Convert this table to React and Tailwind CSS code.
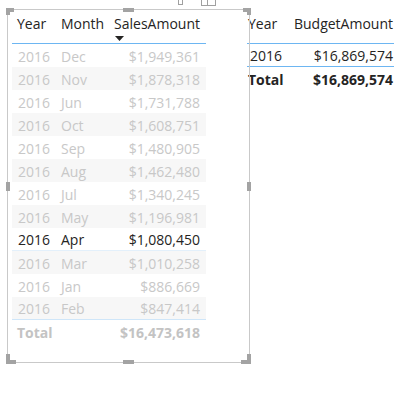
const rows = [
  ['Dec', '$1,949,361'],
  ['Nov', '$1,878,318'],
  ['Jun', '$1,731,788'],
  ['Oct', '$1,608,751'],
  ['Sep', '$1,480,905'],
  ['Aug', '$1,462,480'],
  ['Jul', '$1,340,245'],
  ['May', '$1,196,981'],
  ['Apr', '$1,080,450'],
  ['Mar', '$1,010,258'],
  ['Jan', '$886,669'],
  ['Feb', '$847,414'],
]

function Handle({ className }) {
  return <div className={`absolute bg-[#a3a3a3] ${className}`} />
}

function SalesTable() {
  return (
    <div className="w-[194px] ml-[4px]">
      <div className="relative flex h-[34px] items-start pt-[7px] text-[#252423] border-b border-[#6db6f2]">
        <div className="w-[44px] pl-[5px]">Year</div>
        <div className="w-[53px] pl-[5px]">Month</div>
        <div className="flex-1 pr-[6px] text-right">SalesAmount</div>
        <svg className="absolute left-[103px] top-[26px]" width="9" height="5" viewBox="0 0 9 5">
          <path d="M0 0 H9 L4.5 5 Z" fill="#252423" />
        </svg>
      </div>
      {rows.map(([m, v], i) => {
        const active = m === 'Apr'
        return (
          <div
            key={m}
            className={`flex h-[23px] items-center pt-[2px] ${i % 2 ? 'bg-[#f7f7f7]' : 'bg-white'} ${active ? 'text-[#252423] border-b border-[#e3f0fb]' : 'text-[#c8c8c8]'} ${i === rows.length - 1 ? 'border-b border-[#cfe6f9]' : ''}`}
          >
            <div className="w-[44px] pl-[6px]">2016</div>
            <div className="w-[53px] pl-[5px]">{m}</div>
            <div className="flex-1 pr-[6px] text-right">{v}</div>
          </div>
        )
      })}
      <div className="flex h-[23px] items-center pt-[2px] font-bold text-[#c3c3c3]">
        <div className="w-[97px] pl-[5px]">Total</div>
        <div className="flex-1 pr-[6px] text-right">$16,473,618</div>
      </div>
    </div>
  )
}

function BudgetTable() {
  return (
    <div className="w-[147px] -ml-[3px] mt-[1px] text-[#252423]">
      <div className="flex h-[34px] items-start pt-[7px] border-b border-[#6db6f2]">
        <div className="w-[40px] pl-[1px]">Year</div>
        <div className="flex-1 pr-[1px] text-right">BudgetAmount</div>
      </div>
      <div className="flex h-[23px] items-center pt-[2px] border-b border-[#6db6f2]">
        <div className="w-[40px] pl-[3px]">2016</div>
        <div className="flex-1 pr-[1px] text-right">$16,869,574</div>
      </div>
      <div className="flex h-[23px] items-center pt-[2px] font-bold">
        <div className="w-[40px] pl-[1px]">Total</div>
        <div className="flex-1 pr-[1px] text-right">$16,869,574</div>
      </div>
    </div>
  )
}

export default function App() {
  return (
    <div
      className="relative w-[400px] h-[394px] bg-white text-[14px] leading-none"
      style={{ fontFamily: '"Open Sans", "Liberation Sans", sans-serif' }}
    >
      <div className="absolute left-[178px] top-0 w-[5px] h-[5px] border-x border-b border-[#a0a0a0]" />
      <div className="absolute left-[201px] top-0 w-[15px] h-[6px] border-x border-b border-[#a0a0a0]">
        <div className="ml-[5px] w-px h-full bg-[#a0a0a0]" />
      </div>
      <div className="flex pt-[9px] pl-[7px]">
        <div className="relative z-10 w-[243px] h-[354px] border-[1.5px] border-[#c9c9c9]">
          <SalesTable />
          <Handle className="-left-[2px] -top-[2px] w-[8px] h-[4px]" />
          <Handle className="-left-[2px] -top-[2px] w-[4px] h-[7px]" />
          <Handle className="-right-[2px] -top-[2px] w-[8px] h-[4px]" />
          <Handle className="-right-[2px] -top-[2px] w-[4px] h-[7px]" />
          <Handle className="-left-[2px] -bottom-[2px] w-[10px] h-[4px]" />
          <Handle className="-left-[2px] -bottom-[2px] w-[4px] h-[10px]" />
          <Handle className="-right-[2px] -bottom-[2px] w-[10px] h-[4px]" />
          <Handle className="-right-[2px] -bottom-[2px] w-[4px] h-[10px]" />
          <Handle className="left-[115px] -top-[2px] w-[11px] h-[4px]" />
          <Handle className="left-[115px] -bottom-[2px] w-[11px] h-[4px]" />
          <Handle className="-left-[2px] top-[172px] w-[4px] h-[9px]" />
          <Handle className="-right-[2px] top-[172px] w-[4px] h-[9px]" />
        </div>
        <BudgetTable />
      </div>
    </div>
  )
}
